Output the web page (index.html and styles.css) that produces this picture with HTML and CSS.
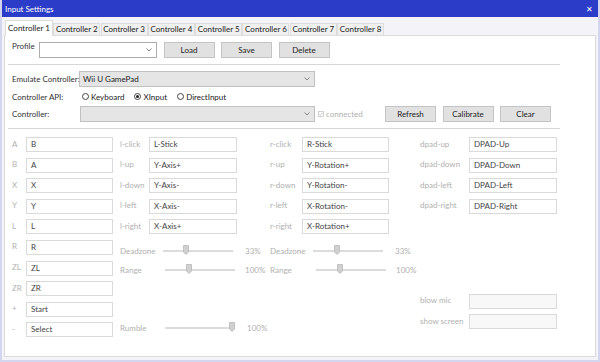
FILE: index.html
```html
<!DOCTYPE html>
<html lang="en">
<head>
  <meta charset="UTF-8">
  <meta name="viewport" content="width=device-width, initial-scale=1.0">
  <title>Input Settings</title>
  <link rel="stylesheet" href="styles.css">
</head>
<body>
  <div class="window">
    <div class="titlebar">
      <span>Input Settings</span>
      <span class="close">&#x2715;</span>
    </div>

    <div class="tabs">
      <div class="tab active">Controller 1</div>
      <div class="tab">Controller 2</div>
      <div class="tab">Controller 3</div>
      <div class="tab">Controller 4</div>
      <div class="tab">Controller 5</div>
      <div class="tab">Controller 6</div>
      <div class="tab">Controller 7</div>
      <div class="tab">Controller 8</div>
    </div>

    <div class="panel">
      <div class="row profile-row">
        <span class="lbl profile-lbl">Profile</span>
        <div class="combo profile-combo">
          <span></span>
          <svg class="chev" width="6" height="4" viewBox="0 0 6 4"><path d="M0.5 0.5 L3 3 L5.5 0.5" fill="none" stroke="#777" stroke-width="0.9"/></svg>
        </div>
        <button class="btn">Load</button>
        <button class="btn">Save</button>
        <button class="btn">Delete</button>
      </div>

      <div class="sep"></div>

      <div class="row">
        <span class="lbl wide">Emulate Controller:</span>
        <div class="combo gray emu-combo">
          <span>Wii U GamePad</span>
          <svg class="chev" width="6" height="4" viewBox="0 0 6 4"><path d="M0.5 0.5 L3 3 L5.5 0.5" fill="none" stroke="#777" stroke-width="0.9"/></svg>
        </div>
      </div>

      <div class="row api-row">
        <span class="lbl wide api-lbl">Controller API:</span>
        <label class="radio"><span class="circle"></span>Keyboard</label>
        <label class="radio"><span class="circle on"></span>XInput</label>
        <label class="radio"><span class="circle"></span>DirectInput</label>
      </div>

      <div class="row">
        <span class="lbl wide ctrl-lbl">Controller:</span>
        <div class="combo gray ctrl-combo">
          <span></span>
          <svg class="chev" width="6" height="4" viewBox="0 0 6 4"><path d="M0.5 0.5 L3 3 L5.5 0.5" fill="none" stroke="#777" stroke-width="0.9"/></svg>
        </div>
        <label class="check">
          <svg width="6" height="6" viewBox="0 0 6 6"><rect x="0.5" y="0.5" width="5" height="5" fill="#fff" stroke="#c8c8c8" stroke-width="0.8"/><path d="M1.3 3 L2.5 4.2 L4.8 1.6" fill="none" stroke="#b8b8b8" stroke-width="0.8"/></svg>
          connected
        </label>
        <button class="btn refresh">Refresh</button>
        <button class="btn">Calibrate</button>
        <button class="btn">Clear</button>
      </div>

      <div class="sep"></div>

      <div class="mapping">
        <div class="col col-buttons">
          <div class="pair"><span class="key">A</span><div class="field">B</div></div>
          <div class="pair"><span class="key">B</span><div class="field">A</div></div>
          <div class="pair"><span class="key">X</span><div class="field">X</div></div>
          <div class="pair"><span class="key">Y</span><div class="field">Y</div></div>
          <div class="pair"><span class="key">L</span><div class="field">L</div></div>
          <div class="pair"><span class="key">R</span><div class="field">R</div></div>
          <div class="pair"><span class="key">ZL</span><div class="field">ZL</div></div>
          <div class="pair"><span class="key">ZR</span><div class="field">ZR</div></div>
          <div class="pair"><span class="key">+</span><div class="field">Start</div></div>
          <div class="pair"><span class="key">-</span><div class="field">Select</div></div>
        </div>

        <div class="col-sticks">
          <div class="stick-grid">
            <div class="pair lstick"><span class="key">l-click</span><div class="field">L-Stick</div></div>
            <div class="pair rstick"><span class="key">r-click</span><div class="field">R-Stick</div></div>
            <div class="pair lstick"><span class="key">l-up</span><div class="field">Y-Axis+</div></div>
            <div class="pair rstick"><span class="key">r-up</span><div class="field">Y-Rotation+</div></div>
            <div class="pair lstick"><span class="key">l-down</span><div class="field">Y-Axis-</div></div>
            <div class="pair rstick"><span class="key">r-down</span><div class="field">Y-Rotation-</div></div>
            <div class="pair lstick"><span class="key">l-left</span><div class="field">X-Axis-</div></div>
            <div class="pair rstick"><span class="key">r-left</span><div class="field">X-Rotation-</div></div>
            <div class="pair lstick"><span class="key">l-right</span><div class="field">X-Axis+</div></div>
            <div class="pair rstick"><span class="key">r-right</span><div class="field">X-Rotation+</div></div>
          </div>

          <div class="slider-row deadzone">
            <div class="slider">
              <span class="key">Deadzone</span>
              <div class="track"><svg class="thumb" style="left: 20px" width="6" height="10" viewBox="0 0 6 10"><path d="M0.5 0.5 H5.5 V7 L3 9.5 L0.5 7 Z" fill="#d0d0d0" stroke="#b8b8b8" stroke-width="0.8"/></svg></div>
              <span class="pct">33%</span>
            </div>
            <div class="slider">
              <span class="key">Deadzone</span>
              <div class="track"><svg class="thumb" style="left: 21px" width="6" height="10" viewBox="0 0 6 10"><path d="M0.5 0.5 H5.5 V7 L3 9.5 L0.5 7 Z" fill="#d0d0d0" stroke="#b8b8b8" stroke-width="0.8"/></svg></div>
              <span class="pct">33%</span>
            </div>
          </div>

          <div class="slider-row range">
            <div class="slider">
              <span class="key">Range</span>
              <div class="track"><svg class="thumb" style="left: 21px" width="6" height="10" viewBox="0 0 6 10"><path d="M0.5 0.5 H5.5 V7 L3 9.5 L0.5 7 Z" fill="#d0d0d0" stroke="#b8b8b8" stroke-width="0.8"/></svg></div>
              <span class="pct">100%</span>
            </div>
            <div class="slider">
              <span class="key">Range</span>
              <div class="track"><svg class="thumb" style="left: 21px" width="6" height="10" viewBox="0 0 6 10"><path d="M0.5 0.5 H5.5 V7 L3 9.5 L0.5 7 Z" fill="#d0d0d0" stroke="#b8b8b8" stroke-width="0.8"/></svg></div>
              <span class="pct">100%</span>
            </div>
          </div>

          <div class="slider-row rumble">
            <div class="slider">
              <span class="key">Rumble</span>
              <div class="track"><svg class="thumb" style="left: 64px" width="6" height="10" viewBox="0 0 6 10"><path d="M0.5 0.5 H5.5 V7 L3 9.5 L0.5 7 Z" fill="#d0d0d0" stroke="#b8b8b8" stroke-width="0.8"/></svg></div>
              <span class="pct">100%</span>
            </div>
          </div>
        </div>

        <div class="col-dpad">
          <div class="col">
            <div class="pair"><span class="key">dpad-up</span><div class="field">DPAD-Up</div></div>
            <div class="pair"><span class="key">dpad-down</span><div class="field">DPAD-Down</div></div>
            <div class="pair"><span class="key">dpad-left</span><div class="field">DPAD-Left</div></div>
            <div class="pair"><span class="key">dpad-right</span><div class="field">DPAD-Right</div></div>
          </div>
          <div class="col extra">
            <div class="pair"><span class="key">blow mic</span><div class="field empty"></div></div>
            <div class="pair"><span class="key">show screen</span><div class="field empty"></div></div>
          </div>
        </div>
      </div>
    </div>
  </div>
</body>
</html>
```

FILE: styles.css
```css
body{
  margin: 0;
  padding: 0;
  font-family: Lato, "Noto Sans", sans-serif;
  font-size: 8px;
  color: #333;
  background: #fff;
  white-space: nowrap;
}

.window{
  width: 600px;
  height: 362px;
  box-sizing: border-box;
  background: #f4f4f8;
  border-left: 2px solid #d4d6f0;
  border-right: 2px solid #d4d6f0;
  border-bottom: 2px solid #d4d6f0;
  overflow: hidden;
}

.titlebar{
  height: 17px;
  margin: 0 -2px;
  padding: 0 7px 0 5px;
  background: #2b3cc9;
  color: #fff;
  display: flex;
  align-items: center;
  justify-content: space-between;
}
.close{
  font-size: 8px;
}

/* tabs */
.tabs{
  display: flex;
  align-items: flex-end;
  height: 18px;
  padding-left: 3px;
}
.tab{
  width: 47px;
  height: 12px;
  box-sizing: border-box;
  border: 1px solid #dcdcdc;
  border-bottom: none;
  margin-right: 0.3px;
  background: #f0f0f0;
  text-align: center;
  line-height: 11px;
  color: #222;
}
.tab.active{
  width: 48px;
  height: 16px;
  margin-bottom: -1px;
  background: #fff;
  line-height: 14px;
  position: relative;
  z-index: 1;
}

.panel{
  margin: 0 2px;
  height: 322px;
  box-sizing: border-box;
  border: 1px solid #dcdcdc;
  background: #fff;
  padding: 6px 0 0 7px;
}

.row{
  display: flex;
  align-items: center;
  height: 16px;
}
.row > *{
  flex-shrink: 0;
}
.lbl{
  color: #333;
}
.profile-lbl{
  width: 27px;
  align-self: flex-start;
  margin-top: -1px;
}
.wide{
  width: 67px;
}
.ctrl-lbl{
  width: 68px;
}

.combo{
  height: 16px;
  box-sizing: border-box;
  border: 1px solid #adadad;
  background: #fff;
  display: flex;
  align-items: center;
  justify-content: space-between;
  padding: 0 4px 0 3px;
  color: #222;
}
.combo.gray{
  background: #e5e5e5;
  border-color: #c0c0c0;
}
.profile-combo{
  width: 118px;
}
.emu-combo{
  width: 236px;
}
.ctrl-combo{
  width: 235px;
}

.btn{
  font-family: inherit;
  font-size: 8px;
  color: #222;
  width: 51px;
  height: 16px;
  padding: 0;
  margin-left: 6.5px;
  border: 1px solid #c4c4c4;
  background: #e1e1e1;
}

.api-row{
  height: 19px;
}
.radio{
  display: flex;
  align-items: center;
  margin-right: 10px;
  color: #222;
}
.radio:first-of-type{
  margin-left: 3px;
}
.circle{
  width: 7px;
  height: 7px;
  box-sizing: border-box;
  border: 1px solid #444;
  border-radius: 50%;
  margin-right: 2px;
  display: flex;
  align-items: center;
  justify-content: center;
}
.circle.on::after{
  content: "";
  width: 3px;
  height: 3px;
  border-radius: 50%;
  background: #222;
}

.check{
  display: flex;
  align-items: center;
  margin-left: 3px;
  color: #b0b0b0;
  width: 60px;
}
.check svg{
  margin-right: 2px;
}
.refresh{
  margin-left: 7px;
}

.sep{
  height: 1px;
  background: #d6d6d6;
  margin: 6px 35px 6px -4px;
}

/* mapping area */
.mapping{
  display: flex;
  margin-top: 8px;
}
.col{
  display: flex;
  flex-direction: column;
  gap: 5.6px;
}
.col-buttons{
  width: 108px;
}
.pair{
  display: flex;
  align-items: center;
  height: 15px;
}
.key{
  color: #b0b0b0;
  flex-shrink: 0;
  margin-top: -2px;
}
.field{
  height: 15px;
  box-sizing: border-box;
  border: 1px solid #dadada;
  background: #fff;
  padding-left: 4px;
  line-height: 13px;
  color: #444;
}
.field.empty{
  background: #f8f8f8;
}
.col-buttons .key{
  width: 14px;
}
.col-buttons .field{
  width: 87px;
}

.col-sticks{
  width: 300px;
}
.stick-grid{
  display: grid;
  grid-template-columns: 150px 150px;
  row-gap: 5.6px;
}
.lstick .key{
  width: 29px;
}
.lstick .field{
  width: 88px;
}
.rstick .key{
  width: 32px;
}
.rstick .field{
  width: 87px;
}

.slider-row{
  display: flex;
  height: 14px;
}
.slider-row.deadzone{
  margin-top: 10px;
}
.slider-row.range{
  margin-top: 5px;
}
.slider-row.rumble{
  margin-top: 44px;
}
.slider{
  width: 150px;
  display: flex;
  align-items: center;
}
.slider .key{
  width: 43px;
  margin-top: 0;
}
.range .key,
.rumble .key{
  width: 45px;
}
.range .slider + .slider .key{
  width: 46px;
}
.track{
  width: 70px;
  height: 2px;
  background: #dcdcdc;
  position: relative;
}
.thumb{
  position: absolute;
  top: -5px;
}
.pct{
  color: #b0b0b0;
  margin-left: 12px;
}
.range .pct{
  margin-left: 10px;
}

.col-dpad .key{
  width: 49px;
}
.col-dpad .field{
  width: 88px;
}
.col-dpad .extra{
  margin-top: 80px;
}
```
